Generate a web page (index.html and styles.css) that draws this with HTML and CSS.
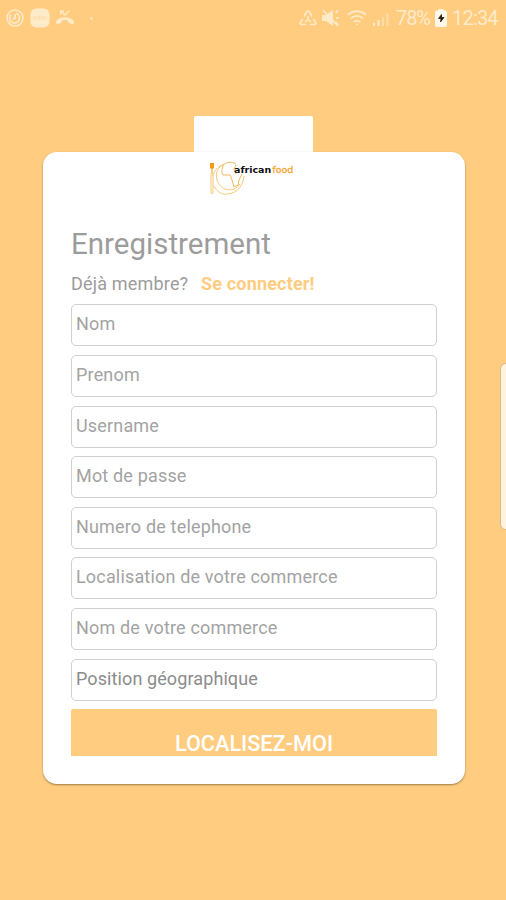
FILE: index.html
```html
<!DOCTYPE html>
<html lang="fr">
<head>
    <meta charset="UTF-8">
    <meta name="viewport" content="width=device-width, initial-scale=1.0">
    <title>African Food - Enregistrement</title>
    <link rel="stylesheet" href="styles.css">
</head>
<body>
    <header class="status-bar">
        <div class="status-left">
            <svg width="20" height="20" viewBox="0 0 20 20" fill="none" stroke="currentColor">
                <circle cx="10" cy="10" r="8" stroke-width="1.5"/>
                <path d="M6 6.5a5 5 0 1 0 5-1.3M10 6v4.500H7.500" stroke-width="1.700"/>
            </svg>
            <svg class="app-icon" width="20" height="20" viewBox="0 0 20 20">
                <rect x="0.500" y="0.500" width="19" height="19" rx="6" fill="currentColor"/>
                <path d="M3 9h14M3 11h14" stroke="#ffd89f" stroke-width="1.200" stroke-dasharray="2 .6"/>
            </svg>
            <svg width="20" height="20" viewBox="0 0 20 20">
                <path d="M1.500 15.500c-.8-1-.5-2.500.5-3.400 4.500-3.800 11.500-3.800 16 0 1 .9 1.300 2.400.5 3.400l-1 .8-4-1.600-.4-2.300a10 10 0 0 0-6.200 0l-.4 2.300-4 1.600z" fill="currentColor"/>
                <path d="M5.500 6.500V3h3.500M6 3.500l4 3.500 4.500-4.500" fill="none" stroke="currentColor" stroke-width="1.300"/>
            </svg>
            <span class="dot"></span>
        </div>
        <div class="status-right">
            <svg width="20" height="20" viewBox="0 0 20 20" fill="none" stroke="currentColor" stroke-width="1.700" stroke-linejoin="round">
                <path d="M6 8.500 8.500 4Q10 1.500 11.500 4L14 8.500M15.500 11l2 3.500q1 2-1.500 2h-4M8.500 16.500H4q-2.500 0-1.500-2L4.500 11"/>
                <path d="M10 8v3.500M7 14l3-2.500 3 2.500" stroke-width="1.600"/>
            </svg>
            <svg class="mute" width="20" height="20" viewBox="0 0 20 20">
                <path d="M1 7h4l7-5v16l-7-5H1z" fill="currentColor"/>
                <path d="M2 2l15 16M15 5l2-3M15 10h3M15 14l2 3" stroke="currentColor" stroke-width="1.600"/>
            </svg>
            <svg class="wifi" width="22" height="20" viewBox="0 0 22 20" fill="none" stroke="currentColor" stroke-width="1.800">
                <path d="M2 7c5-5 13-5 18 0M5 10.500c3.500-3.500 8.500-3.500 12 0M8 14c2-1.800 4-1.800 6 0"/>
                <circle cx="11" cy="16.500" r="1" fill="currentColor" stroke="none"/>
            </svg>
            <svg class="signal" width="18" height="20" viewBox="0 0 18 20" stroke="currentColor" stroke-width="2">
                <path d="M2 18v-3M6.500 18v-6" />
                <path d="M11 18V9M15.500 18V5" opacity=".55"/>
            </svg>
            <span class="percent">78%</span>
            <svg class="battery" width="12" height="18" viewBox="0 0 12 18">
                <path d="M3.500 0h5v1.500H10a2 2 0 0 1 2 2V16a2 2 0 0 1-2 2H2a2 2 0 0 1-2-2V3.500a2 2 0 0 1 2-2h1.500z" fill="#fff8e8"/>
                <path d="M6.500 5.500 3.500 9.500h2.500L5.500 13l3.500-4.500H6.500z" fill="#1c1710" stroke="#1c1710" stroke-width=".7"/>
            </svg>
            <span class="clock">12:34</span>
        </div>
    </header>

    <main class="screen">
        <div class="tab"></div>
        <div class="card">
            <div class="logo">
                <svg width="38" height="36" viewBox="0 0 38 36" fill="none" stroke="#f5c877" stroke-width="1">
                    <path d="M1 2h4v5q-2 2-4 0z" fill="#f39a13" stroke="none"/>
                    <path d="M3 8v4" stroke="#f39a13"/>
                    <path d="M2 12h2v20c0 1-2 1-2 0z"/>
                    <path d="M14 4C9 5 5 10 4 15M5 25c3 6 8 9 14 8 9-1 15-8 16-18"/>
                    <path d="M15 3c-6 3-9 9-7 16 3 10 16 14 23 4"/>
                    <path d="M14 5c2-4 8-5 13-2M14 5c-1 3-2 6 0 9h7c2 1 0 3 2 5l2 7 4-2 1-5 3-6M27 4l-2 4 2 5" stroke="#eeb85c"/>
                </svg>
                <span class="brand">african<span class="brand-food">food</span></span>
            </div>

            <h1>Enregistrement</h1>
            <p class="member">Déjà membre? <a class="login" href="#">Se connecter!</a></p>

            <form class="form">
                <input type="text" placeholder="Nom">
                <input type="text" placeholder="Prenom">
                <input type="text" placeholder="Username">
                <input type="password" placeholder="Mot de passe">
                <input type="tel" placeholder="Numero de telephone">
                <input type="text" placeholder="Localisation de votre commerce">
                <input type="text" placeholder="Nom de votre commerce">
                <input class="position" type="text" placeholder="Position géographique">
                <button type="button">LOCALISEZ-MOI</button>
            </form>
        </div>
    </main>

    <!-- poignée du panneau latéral -->
    <div class="edge-handle"></div>
</body>
</html>
```
FILE: styles.css
```css
* {
    box-sizing: border-box;
}
body {
    margin: 0;
    height: 900px;
    overflow: hidden;
    position: relative;
    background-color: #ffcc80;
    font-family: Roboto, "Liberation Sans", sans-serif;
}
.status-bar {
    display: flex;
    justify-content: space-between;
    height: 36px;
    padding: 0 8px 0 5px;
    color: #ffebc9;
}
.status-left,
.status-right {
    display: flex;
    align-items: center;
}
.status-left {
    gap: 5px;
}
.dot {
    width: 3px;
    height: 3px;
    margin-left: 10px;
    border-radius: 50%;
    background: #ffe3b5;
}
.mute {
    margin-left: 3px;
}
.wifi {
    margin-left: 5px;
}
.signal {
    margin-left: 4px;
}
.percent,
.clock {
    font-size: 20px;
    line-height: 36px;
    white-space: nowrap;
}
.percent {
    width: 34px;
    margin-left: 6px;
    letter-spacing: -1.1px;
}
.battery {
    margin-left: 5px;
}
.clock {
    width: 46px;
    margin-left: 5px;
    letter-spacing: -0.8px;
}
.screen {
    padding: 80px 41px 0 43px;
}
.tab {
    width: 119px;
    height: 36px;
    margin-left: 151px;
    background: white;
    border-radius: 2px 2px 0 0;
}
.card {
    height: 632px;
    padding: 9px 28px 0;
    background: white;
    border-radius: 14px;
    box-shadow: 0 1px 2px rgba(80, 60, 20, 0.55);
}
.logo {
    display: flex;
    height: 36px;
    margin-left: 138px;
}
.brand {
    margin: 3px 0 0 -13px;
    font-family: "DejaVu Sans", sans-serif;
    font-size: 9.5px;
    font-weight: bold;
    line-height: 12px;
    letter-spacing: 0;
    color: #111;
}
.brand-food {
    margin-left: 1px;
    font-weight: normal;
    color: #f5a633;
    -webkit-text-stroke: 0.3px #f5a633;
}
h1 {
    margin: 29px 0 0;
    font-size: 29.5px;
    font-weight: normal;
    line-height: 36px;
    color: #9c9c9c;
}
.member {
    margin: 11px 0 0;
    font-size: 18px;
    line-height: 22px;
    letter-spacing: 0.18px;
    color: #9c9c9c;
}
.login {
    margin-left: 8px;
    font-weight: bold;
    color: #ffcc80;
    text-decoration: none;
}
.form {
    display: flex;
    flex-direction: column;
    gap: 8.6px;
    margin-top: 9.4px;
}
.form input {
    width: 366px;
    height: 42px;
    padding: 0 4px 3px;
    border: 1.5px solid #d0d0d0;
    border-radius: 5px;
    font-family: inherit;
    font-size: 18px;
    letter-spacing: 0.17px;
    background: white;
}
.form input::placeholder {
    color: #a3a3a3;
}
.form .position {
    letter-spacing: 0.1px;
}
.form .position::placeholder {
    color: #8c8c8c;
}
.form button {
    width: 366px;
    height: 47px;
    padding: 23px 0 0;
    border: none;
    border-radius: 2px 2px 0 0;
    overflow: hidden;
    background-color: #ffcc80;
    color: white;
    font-family: inherit;
    font-size: 21.7px;
    font-weight: 500;
    line-height: 24px;
}
.edge-handle {
    position: absolute;
    top: 363px;
    right: -8px;
    width: 14px;
    height: 167px;
    border: 1px solid #d8bb8c;
    border-radius: 6px;
    background: #fff3e0;
}
```
